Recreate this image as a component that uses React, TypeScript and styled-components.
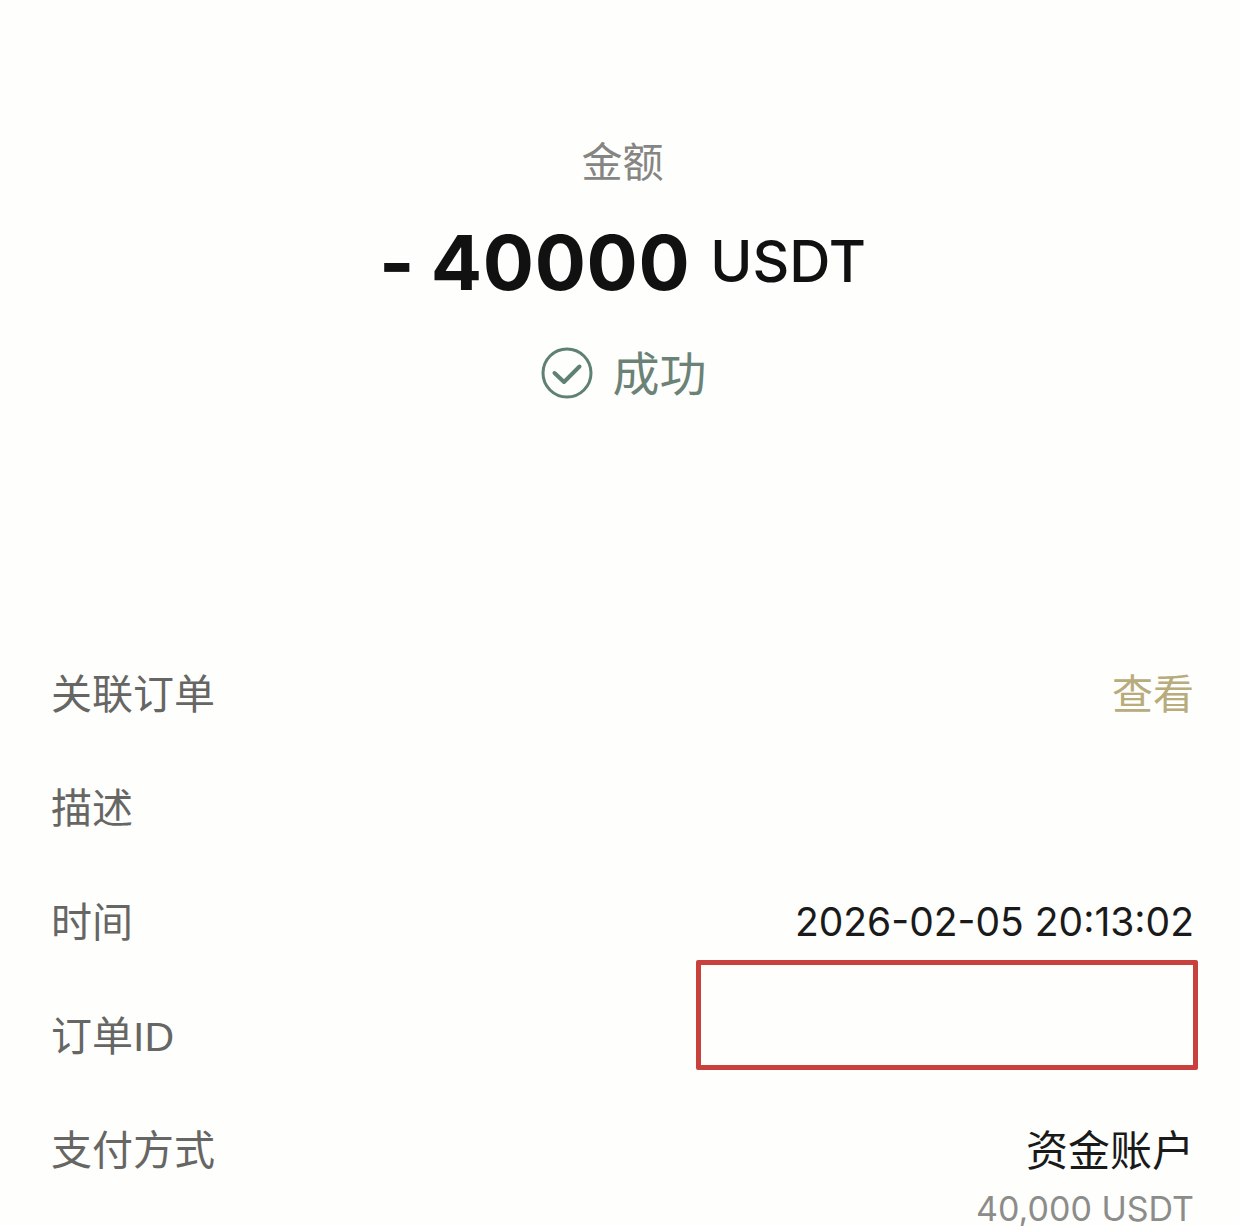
import React from "react";
import styled, { createGlobalStyle } from "styled-components";

const Global = createGlobalStyle`
  html, body { margin: 0; padding: 0; background: #fefefc; height: 100%; overflow: hidden; }
  body { font-family: Inter, "Noto Sans CJK SC", sans-serif; }
`;

const CJK = `"Liberation Sans", "Noto Sans CJK SC", sans-serif`;

const Page = styled.div`
  width: 1240px;
  height: 1226px;
  overflow: hidden;
  background: #fefefc;
  padding: 134px 46px 0 51px;
  box-sizing: border-box;
`;

const Hero = styled.section`
  display: flex;
  flex-direction: column;
  align-items: center;
`;

const HeroLabel = styled.div`
  font-family: ${CJK};
  font-size: 41px;
  line-height: 58px;
  color: #858583;
  font-weight: 400;
`;

const Amount = styled.div`
  display: flex;
  align-items: center;
  gap: 20px;
  margin-top: 27px;
  height: 86px;
  line-height: 86px;
  color: #111;
`;

const AmountValue = styled.span`
  font-family: Inter, sans-serif;
  font-size: 76px;
  font-weight: 700;
  letter-spacing: 0.6px;
  word-spacing: -3px;
`;

const AmountUnit = styled.span`
  font-family: Inter, sans-serif;
  font-size: 57px;
  font-weight: 500;
`;

const Status = styled.div`
  display: flex;
  align-items: center;
  gap: 20px;
  margin-top: 38px;
  padding-left: 2px;
  height: 60px;
  color: #6b8377;
  font-family: ${CJK};
  font-size: 47px;
`;

const StatusText = styled.span`
  padding-bottom: 6px;
`;

const Rows = styled.section`
  margin-top: 231px;
  display: flex;
  flex-direction: column;
`;

const Row = styled.div`
  position: relative;
  height: 114px;
  display: flex;
  align-items: center;
  justify-content: space-between;
  font-family: ${CJK};
  font-size: 41px;
`;

const Label = styled.span`
  color: #666664;
`;

const Value = styled.span<{ $tone?: "dark" | "gold" }>`
  color: ${(p) => (p.$tone === "gold" ? "#b8ab7c" : "#1a1a1a")};
  font-family: Inter, "Noto Sans CJK SC", sans-serif;
`;

const DateValue = styled(Value)`
  font-size: 39px;
  padding-top: 4px;
`;

const Redaction = styled.div`
  position: absolute;
  left: 645px;
  right: -4px;
  top: -16px;
  height: 110px;
  box-sizing: border-box;
  border: 5px solid #c9413c;
  border-radius: 2px;
`;

const PaymentRow = styled.div`
  display: grid;
  grid-template-columns: 1fr auto;
  font-family: ${CJK};
  font-size: 41px;
  align-items: center;
  line-height: 58px;
  padding-top: 32px;
`;

const PaymentValue = styled(Value)`
  justify-self: end;
  font-size: 42px;
`;

const Sub = styled.div`
  grid-column: 2;
  justify-self: end;
  margin-top: 13px;
  font-family: Inter, sans-serif;
  font-size: 34px;
  color: #8c8c8a;
  line-height: 32px;
`;

const CheckIcon = () => (
  <svg width="52" height="52" viewBox="0 0 52 52" fill="none" aria-hidden="true">
    <circle cx="26" cy="26" r="24" stroke="#5f8173" strokeWidth="3" />
    <path d="M13.5 26 L23 35 L38.5 19.5" stroke="#5f8173" strokeWidth="4" strokeLinecap="round" strokeLinejoin="round" />
  </svg>
);

export default function App() {
  return (
    <Page>
      <Global />
      <Hero>
        <HeroLabel>金额</HeroLabel>
        <Amount>
          <AmountValue>- 40000</AmountValue>
          <AmountUnit>USDT</AmountUnit>
        </Amount>
        <Status>
          <CheckIcon />
          <StatusText>成功</StatusText>
        </Status>
      </Hero>
      <Rows>
        <Row>
          <Label>关联订单</Label>
          <Value $tone="gold">查看</Value>
        </Row>
        <Row>
          <Label>描述</Label>
        </Row>
        <Row>
          <Label>时间</Label>
          <DateValue>2026-02-05 20:13:02</DateValue>
        </Row>
        <Row>
          <Label>订单ID</Label>
          <Redaction />
        </Row>
        <PaymentRow>
          <Label>支付方式</Label>
          <PaymentValue>资金账户</PaymentValue>
          <Sub>40,000 USDT</Sub>
        </PaymentRow>
      </Rows>
    </Page>
  );
}
